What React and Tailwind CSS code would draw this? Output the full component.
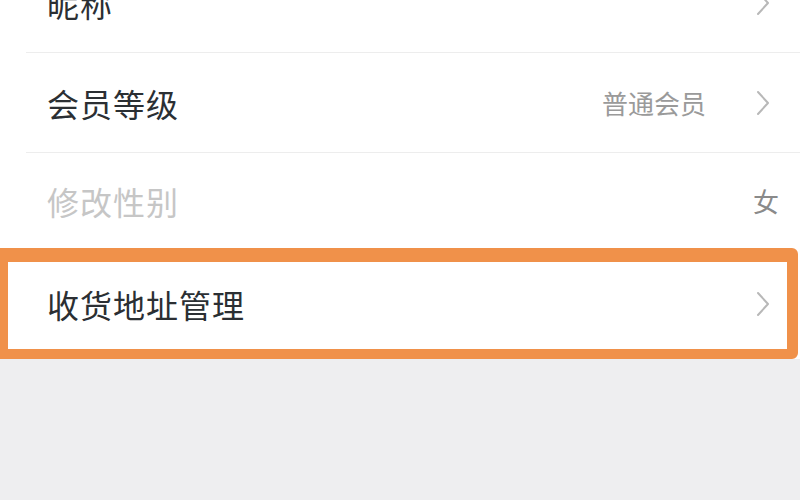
const Chevron = ({ className = "" }) => (
    <svg
        className={className}
        width="14"
        height="26"
        viewBox="0 0 14 26"
        fill="none"
        stroke="#b8b8b8"
        strokeWidth="2"
        strokeLinecap="round"
        strokeLinejoin="round"
    >
        <path d="M2 2 L12 13 L2 24" />
    </svg>
);

const Row = ({ label, value, muted, arrow = true, last }) => (
    <div
        className={`flex items-center ${last ? "h-[95px]" : "h-[100px] border-b border-[#ededed]"} pl-[21px] ${
            arrow ? "pr-[30px]" : "pr-[21px]"
        }`}
    >
        <span className={`flex-1 text-[32px] tracking-[1px] ${muted ? "text-[#c6c6c6]" : "text-[#2b2f33]"}`}>
            {label}
        </span>
        {value && (
            <span className={`text-[26px] ${arrow ? "text-[#9a9a9a] mr-[50px]" : "text-[#8a8a8a]"}`}>{value}</span>
        )}
        {arrow && <Chevron />}
    </div>
);

export default function App() {
    return (
        <div
            className="w-[800px] h-[500px] overflow-hidden bg-[#eeeef0]"
            style={{ fontFamily: '"Noto Sans CJK SC", "Noto Sans", sans-serif' }}
        >
            <div className="bg-white">
                <div className="-mt-[47px] ml-[26px]">
                    <Row label="昵称" />
                    <Row label="会员等级" value="普通会员" />
                    <Row label="修改性别" value="女" muted arrow={false} last />
                </div>
                <div className="border-t-[14px] border-b-[10px] border-l-[8px] border-r-[11px] border-[#f0914a] rounded-r-[6px] w-[798px] bg-white">
                    <div className="flex items-center h-[87px] pl-[39px] pr-[17px] pb-[4px]">
                        <span className="flex-1 text-[32px] tracking-[1px] text-[#2b2f33]">收货地址管理</span>
                        <Chevron />
                    </div>
                </div>
            </div>
        </div>
    );
}
